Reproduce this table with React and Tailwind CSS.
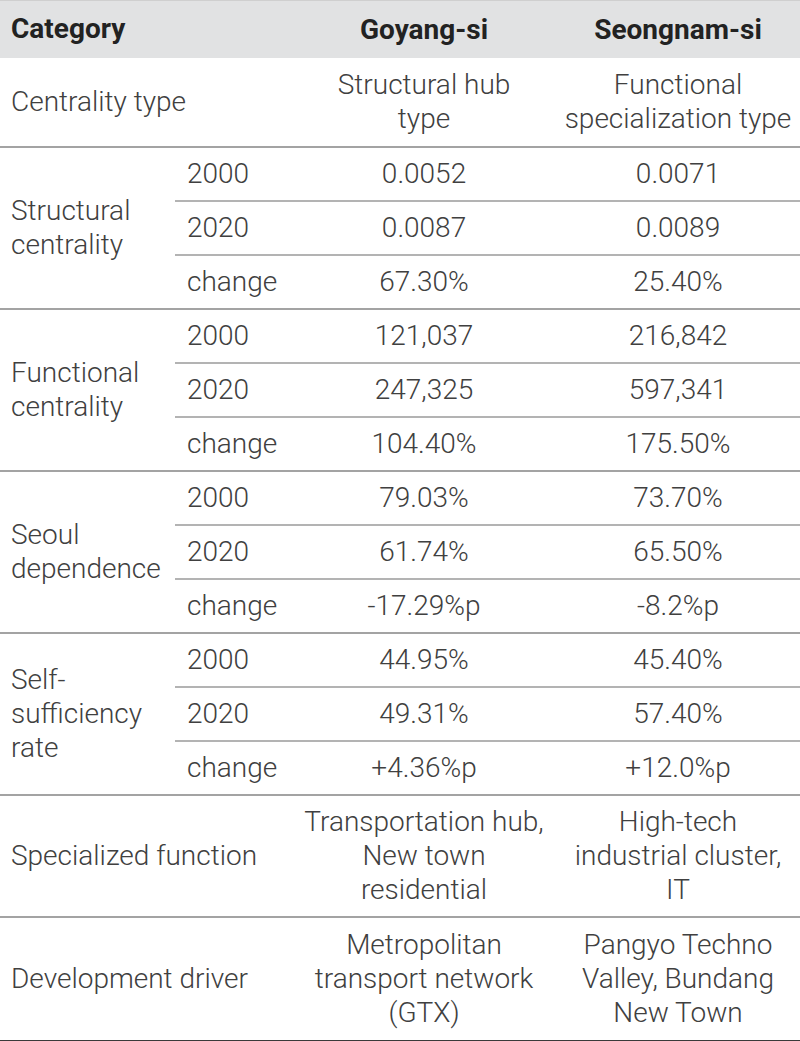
import React from 'react';

const blocks = [
  {
    label: ['Structural', 'centrality'],
    rows: [
      ['2000', '0.0052', '0.0071'],
      ['2020', '0.0087', '0.0089'],
      ['change', '67.30%', '25.40%'],
    ],
  },
  {
    label: ['Functional', 'centrality'],
    rows: [
      ['2000', '121,037', '216,842'],
      ['2020', '247,325', '597,341'],
      ['change', '104.40%', '175.50%'],
    ],
  },
  {
    label: ['Seoul', 'dependence'],
    rows: [
      ['2000', '79.03%', '73.70%'],
      ['2020', '61.74%', '65.50%'],
      ['change', '-17.29%p', '-8.2%p'],
    ],
  },
  {
    label: ['Self-', 'sufficiency', 'rate'],
    rows: [
      ['2000', '44.95%', '45.40%'],
      ['2020', '49.31%', '57.40%'],
      ['change', '+4.36%p', '+12.0%p'],
    ],
  },
];

const Lines = ({ lines }) =>
  lines.map((l, i) => (
    <React.Fragment key={i}>
      {i > 0 && <br />}
      {l}
    </React.Fragment>
  ));

const App = () => {
  return (
    <div className="w-[800px] bg-white font-['Roboto_Light','Roboto',sans-serif] text-[28px] leading-[34px] font-light text-[#404040]">
      <table className="w-full border-collapse table-fixed">
        <colgroup>
          <col className="w-[175px]" />
          <col className="w-[125px]" />
          <col className="w-[248px]" />
          <col className="w-[252px]" />
        </colgroup>
        <thead>
          <tr className="bg-[#e1e2e3] border-t border-[#cfcfcf] font-['Roboto',sans-serif]">
            <th colSpan={2} className="text-left font-bold text-[#222] pl-[11px] pt-[11px] pb-[12px]">Category</th>
            <th className="text-center font-bold text-[#222]">Goyang-si</th>
            <th className="text-center font-bold text-[#222] pl-2">Seongnam-si</th>
          </tr>
        </thead>
        <tbody>
          {/* centrality type */}
          <tr className="border-b-2 border-[#a3a3a3]">
            <td colSpan={2} className="pl-[11px] py-[10px]">Centrality type</td>
            <td className="text-center py-[10px]">Structural hub<br />type</td>
            <td className="text-center py-[10px] pl-2">Functional<br />specialization type</td>
          </tr>

          {blocks.map((b, bi) =>
            b.rows.map((r, ri) => (
              <tr key={bi + '-' + ri} className={ri === 2 ? 'border-b-2 border-[#a3a3a3]' : ''}>
                {ri === 0 && (
                  <td rowSpan={3} className="pl-[11px] align-middle">
                    <Lines lines={b.label} />
                  </td>
                )}
                <td className={'pl-3 py-[9px] ' + (ri < 2 ? 'border-b-2 border-[#b3b3b3]' : '')}>{r[0]}</td>
                <td className={'text-center py-[9px] ' + (ri < 2 ? 'border-b-2 border-[#b3b3b3]' : '')}>{r[1]}</td>
                <td className={'text-center py-[9px] pl-2 ' + (ri < 2 ? 'border-b-2 border-[#b3b3b3]' : '')}>{r[2]}</td>
              </tr>
            ))
          )}

          <tr className="border-b-2 border-[#a3a3a3]">
            <td colSpan={2} className="pl-[11px] py-[9px]">Specialized function</td>
            <td className="text-center py-[9px]">Transportation hub,<br />New town<br />residential</td>
            <td className="text-center py-[9px] pl-2">High-tech<br />industrial cluster,<br />IT</td>
          </tr>
          <tr className="border-b-2 border-[#3a3a3a]">
            <td colSpan={2} className="pl-[11px] pt-[10px] pb-[10px]">Development driver</td>
            <td className="text-center pt-[10px] pb-[10px]">Metropolitan<br />transport network<br />(GTX)</td>
            <td className="text-center pt-[10px] pb-[10px] pl-2">Pangyo Techno<br />Valley, Bundang<br />New Town</td>
          </tr>
        </tbody>
      </table>
    </div>
  );
};

export default App;
